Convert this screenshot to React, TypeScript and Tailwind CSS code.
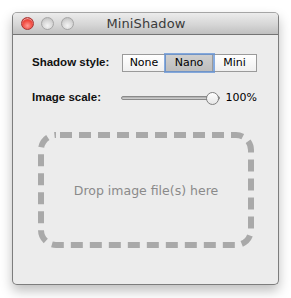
import React from "react";

function Light({ red }: { red?: boolean }) {
  return (
    <div
      className={
        red
          ? "w-[13px] h-[13px] rounded-full border border-[#a33] bg-[radial-gradient(circle_at_50%_70%,#ff9a93_0%,#f0453a_55%,#b5221c_100%)] shadow-[inset_0_1px_1px_rgba(255,255,255,0.6)]"
          : "w-[13px] h-[13px] rounded-full border border-[#a5a5a5] bg-[radial-gradient(circle_at_50%_70%,#f4f4f4_0%,#d6d6d6_55%,#b5b5b5_100%)]"
      }
    />
  );
}

export default function App() {
  return (
    <div className="w-[291px] h-[298px] bg-white pt-[12px] pl-[12px] font-['DejaVu_Sans',sans-serif]">
      <div className="w-[267px] h-[273px] flex flex-col rounded-[5px] border border-[#7d7d7d] border-t-[#a5a5a5] bg-[#ececec] overflow-hidden shadow-[0_6px_12px_rgba(0,0,0,0.25)]">
        <div className="h-[22px] shrink-0 flex items-center pl-[8px] gap-[7px] bg-[linear-gradient(#ececec,#d6d6d6_55%,#c0c0c0)] border-b border-[#747474] relative">
          <Light red />
          <Light />
          <Light />
          <div className="absolute inset-0 flex items-center justify-center text-[13px] text-[#3a3a3a] tracking-[0.1px] pl-[1px]">
            MiniShadow
          </div>
        </div>
        <div className="flex-1 flex flex-col pl-[19px] pr-[21px]">
          <div className="flex items-center mt-[19px] h-[18px]">
            <div className="w-[90px] text-[11.5px] font-bold text-[#111] font-['Liberation_Sans',sans-serif]">Shadow style:</div>
            <div className="flex h-[18px] text-[11px] text-black border border-[#9a9a9a] bg-white">
              <div className="w-[43px] flex items-center justify-center bg-[linear-gradient(#ffffff,#f0f0f0)] border-r border-[#9a9a9a]">None</div>
              <div className="w-[47px] flex items-center justify-center bg-[linear-gradient(#cfcfcf,#bdbdbd)] shadow-[0_0_0_2px_rgba(98,146,214,0.75)] relative z-10 border-r border-[#9a9a9a]">Nano</div>
              <div className="w-[43px] flex items-center justify-center bg-[linear-gradient(#ffffff,#f0f0f0)]">Mini</div>
            </div>
          </div>
          <div className="flex items-center mt-[18px] h-[16px]">
            <div className="w-[90px] text-[11.5px] font-bold text-[#111] font-['Liberation_Sans',sans-serif]">Image scale:</div>
            <div className="relative w-[99px] h-[13px] flex items-center">
              <div className="w-full h-[4px] rounded-full border border-[#8a8a8a] bg-[linear-gradient(#a9a9a9,#d6d6d6)]" />
              <div className="absolute right-[1px] top-[0px] w-[13px] h-[13px] rounded-full border border-[#808080] bg-[linear-gradient(#ffffff,#e6e6e6)]" />
            </div>
            <div className="ml-[6px] text-[11px] text-black">100%</div>
          </div>
          <div className="relative mt-[26px] ml-[6px] w-[216px] h-[116px] flex items-center justify-center">
            <svg className="absolute inset-0" width="216" height="116" viewBox="0 0 216 116">
              <rect x="3" y="3" width="210" height="110" rx="15" ry="15" fill="none" stroke="#a9a9a9" strokeWidth="6" strokeDasharray="12 7" strokeDashoffset="-4" />
            </svg>
            <div className="relative text-[12.5px] text-[#8a8a8a] mt-[3px]">Drop image file(s) here</div>
          </div>
        </div>
      </div>
    </div>
  );
}
